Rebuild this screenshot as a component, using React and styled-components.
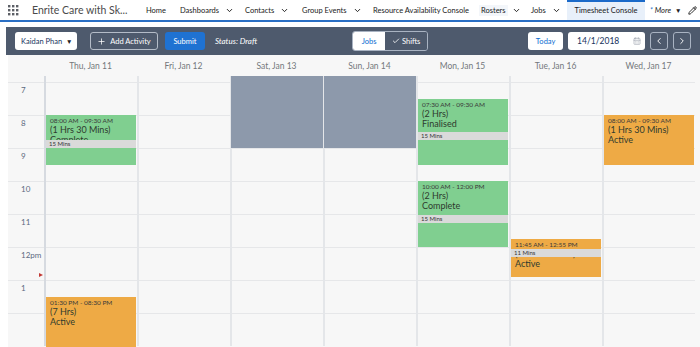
import styled, { createGlobalStyle } from "styled-components";
import { Plus, Check, ChevronDown, ChevronLeft, ChevronRight, CalendarDays, Pencil } from "lucide-react";

const GlobalStyle = createGlobalStyle`
  html, body {
    margin: 0;
    padding: 0;
    background: #ffffff;
    overflow: hidden;
  }
  body {
    width: 700px;
    height: 347px;
    font-family: Lato, "Open Sans", sans-serif;
    color: #16325c;
  }
`;

const HOUR = 33;
const FIRST = 7;
const LEAD = 6;
const hourY = (h) => LEAD + (h - FIRST) * HOUR;

const DAYS = [
  {
    label: "Thu, Jan 11",
    events: [
      { start: 8, end: 9.5, tone: "green", time: "08:00 AM - 09:30 AM", dur: "(1 Hrs 30 Mins)", status: "Complete", breakAt: 25, breakLabel: "15 Mins" },
      { start: 13.5, end: 20.5, tone: "orange", time: "01:30 PM - 08:30 PM", dur: "(7 Hrs)", status: "Active" },
    ],
  },
  { label: "Fri, Jan 12", events: [] },
  { label: "Sat, Jan 13", blockedUntil: 9, events: [] },
  { label: "Sun, Jan 14", blockedUntil: 9, events: [] },
  {
    label: "Mon, Jan 15",
    events: [
      { start: 7.5, end: 9.5, tone: "green", time: "07:30 AM - 09:30 AM", dur: "(2 Hrs)", status: "Finalised", breakAt: 33, breakLabel: "15 Mins" },
      { start: 10, end: 12, tone: "green", time: "10:00 AM - 12:00 PM", dur: "(2 Hrs)", status: "Complete", breakAt: 34, breakLabel: "15 Mins" },
    ],
  },
  {
    label: "Tue, Jan 16",
    events: [
      { start: 11.75, end: 12 + 55 / 60, tone: "orange", time: "11:45 AM - 12:55 PM", dur: "(1 Hrs 10 Mins)", status: "Active", breakAt: 10, breakLabel: "11 Mins" },
    ],
  },
  {
    label: "Wed, Jan 17",
    events: [
      { start: 8, end: 9.5, tone: "orange", time: "08:00 AM - 09:30 AM", dur: "(1 Hrs 30 Mins)", status: "Active" },
    ],
  },
];

const HOURS = ["7", "8", "9", "10", "11", "12pm", "1", ""];

const NAV = [
  { label: "Home", w: 34 },
  { label: "Dashboards", w: 65, menu: true },
  { label: "Contacts", w: 57, menu: true },
  { label: "Group Events", w: 71, menu: true },
  { label: "Resource Availability Console", w: 108 },
  { label: "Rosters", w: 50, menu: true, hover: true },
  { label: "Jobs", w: 36, menu: true },
];

const TONES = {
  green: "#80cf90",
  orange: "#eeaa45",
};

/* ---------- top navigation ---------- */

const Nav = styled.nav`
  display: flex;
  align-items: stretch;
  height: 20px;
  border-bottom: 2px solid #2a6fc4;
  background: #ffffff;
  white-space: nowrap;
  overflow: hidden;
`;

const Launcher = styled.div`
  flex: none;
  display: flex;
  align-items: center;
  width: 24px;
  padding-left: 8px;
  color: #5c5f66;
`;

const AppName = styled.div`
  flex: none;
  display: flex;
  align-items: center;
  width: 114px;
  font-size: 10.5px;
  color: #4a4a4a;
`;

const NavItem = styled.div`
  flex: none;
  display: flex;
  align-items: center;
  box-sizing: border-box;
  width: ${(p) => p.$w}px;
  font-size: 7.5px;
  color: #1a1a1a;

  span.label {
    padding: 1px 2px;
    margin-left: -2px;
    background: ${(p) => (p.$hover ? "#f3f6fa" : "transparent")};
  }

  svg {
    margin-left: 4px;
  }
`;

const ActiveTab = styled.div`
  flex: none;
  display: flex;
  align-items: center;
  justify-content: center;
  width: 78px;
  font-size: 7.5px;
  color: #1a1a1a;
  background: #e8f0fa;
  box-shadow: inset 0 2px 0 #1b6ac9;
`;

const MoreItem = styled.div`
  flex: none;
  display: flex;
  align-items: center;
  width: 38px;
  padding-left: 5px;
  font-size: 7.5px;
  font-style: italic;
  color: #1a1a1a;
`;

const EditItem = styled.div`
  flex: none;
  display: flex;
  align-items: center;
  color: #222;
`;

const Star = styled.span`
  color: #1b6ac9;
  font-size: 7px;
  margin-right: 2px;
`;

const Caret = styled.span`
  font-size: 6.5px;
  font-style: normal;
  margin-left: 4px;
  color: #222;
`;

/* ---------- toolbar ---------- */

const Page = styled.div`
  padding: 5px 0 0 6px;
  background: #ffffff;
`;

const Toolbar = styled.div`
  display: flex;
  align-items: center;
  height: 28px;
  padding: 0 9px;
  background: #4e5a6d;
  white-space: nowrap;
`;

const Select = styled.div`
  display: flex;
  align-items: center;
  justify-content: space-between;
  box-sizing: border-box;
  width: 62px;
  height: 18px;
  padding: 0 5px 0 6px;
  border-radius: 3px;
  background: #ffffff;
  font-size: 7.5px;
  color: #16325c;
`;

const Button = styled.div`
  display: flex;
  align-items: center;
  justify-content: center;
  gap: 4px;
  box-sizing: border-box;
  width: ${(p) => p.$w}px;
  height: 18px;
  margin-left: ${(p) => p.$ml || 0}px;
  border-radius: 3px;
  font-size: 7.5px;
  border: 1px solid ${(p) => p.$border || "transparent"};
  background: ${(p) => p.$bg || "transparent"};
  color: ${(p) => p.$color || "#ffffff"};
`;

const Status = styled.div`
  margin-left: 10px;
  font-size: 8px;
  font-style: italic;
  color: #ffffff;
`;

const Toggle = styled.div`
  display: flex;
  margin-left: 95px;
  height: 18px;
  border-radius: 3px;
  overflow: hidden;
  border: 1px solid #a9b3c2;
`;

const ToggleOption = styled.div`
  display: flex;
  align-items: center;
  justify-content: center;
  gap: 2px;
  width: ${(p) => p.$w}px;
  font-size: 7.5px;
  background: ${(p) => (p.$on ? "#ffffff" : "#4e5a6d")};
  color: ${(p) => (p.$on ? "#0a6bd1" : "#ffffff")};
`;

const DateInput = styled.div`
  display: flex;
  align-items: center;
  justify-content: space-between;
  box-sizing: border-box;
  width: 77px;
  height: 18px;
  margin-left: 5px;
  padding: 0 4px 0 9px;
  border-radius: 3px;
  background: #ffffff;
  font-size: 8.5px;
  color: #16325c;
`;

/* ---------- calendar ---------- */

const Calendar = styled.div`
  margin-left: 2px;
  background: #f7f7f7;
  height: 292px;
  overflow: hidden;
`;

const Columns = "36px repeat(7, 93px)";

const HeaderRow = styled.div`
  display: grid;
  grid-template-columns: ${Columns};
  height: 21px;
`;

const DayLabel = styled.div`
  display: flex;
  align-items: center;
  justify-content: center;
  font-size: 8.5px;
  color: #74777c;
`;

const Body = styled.div`
  display: grid;
  grid-template-columns: ${Columns};
`;

const TimeColumn = styled.div`
  position: relative;
  display: flex;
  flex-direction: column;
`;

const Lead = styled.div`
  height: ${LEAD}px;
  flex: none;
`;

const HourCell = styled.div`
  box-sizing: border-box;
  height: ${HOUR}px;
  flex: none;
  border-top: 1px solid #e6e7e9;
`;

const TimeLabel = styled(HourCell)`
  padding: 2px 0 0 13px;
  font-size: 8px;
  color: #5b6a80;
`;

const NowFlag = styled.div`
  position: absolute;
  right: 1px;
  top: ${(p) => p.$y - 2}px;
  width: 0;
  height: 0;
  border-top: 2.5px solid transparent;
  border-bottom: 2.5px solid transparent;
  border-left: 4px solid #c23934;
`;

const DayColumn = styled.div`
  position: relative;
  display: flex;
  flex-direction: column;
  border-left: 2px solid ${(p) => (p.$first ? "#d6dae0" : "#e4e6e9")};
`;

const Blocked = styled.div`
  position: absolute;
  top: 0;
  left: -1px;
  right: 0;
  height: ${(p) => p.$h}px;
  background: #8d99ab;
`;

const EventBox = styled.div`
  position: absolute;
  left: 0;
  right: 1px;
  box-sizing: border-box;
  padding: 2px 4px;
  overflow: hidden;
  background: ${(p) => TONES[p.$tone]};
  color: #2b2b2b;
`;

const EventTime = styled.div`
  font-size: 6.5px;
  line-height: 8px;
  color: #3a3a3a;
`;

const EventLine = styled.div`
  font-size: 9px;
  line-height: 10px;
  color: #2e3a2e;
`;

const BreakBar = styled.div`
  position: absolute;
  left: 0;
  right: 0;
  top: ${(p) => p.$top}px;
  height: 8px;
  padding-left: 3px;
  background: #dadada;
  font-size: 6px;
  line-height: 8px;
  color: #333;
`;

function LauncherIcon() {
  const dots = [];
  for (let r = 0; r < 3; r++) {
    for (let c = 0; c < 3; c++) {
      dots.push(<rect key={`${r}${c}`} x={c * 4} y={r * 4} width="2.4" height="2.4" fill="currentColor" />);
    }
  }
  return (
    <svg width="11" height="11" viewBox="0 0 11 11">
      {dots}
    </svg>
  );
}

function CalEvent({ ev }) {
  const top = hourY(ev.start);
  const height = (ev.end - ev.start) * HOUR;
  return (
    <EventBox $tone={ev.tone} style={{ top, height }}>
      <EventTime>{ev.time}</EventTime>
      <EventLine>{ev.dur}</EventLine>
      <EventLine>{ev.status}</EventLine>
      {ev.breakLabel && <BreakBar $top={ev.breakAt}>{ev.breakLabel}</BreakBar>}
    </EventBox>
  );
}

export default function App() {
  return (
    <>
      <GlobalStyle />
      <Nav>
        <Launcher>
          <LauncherIcon />
        </Launcher>
        <AppName>Enrite Care with Sk...</AppName>
        {NAV.map((n) => (
          <NavItem key={n.label} $w={n.w} $hover={n.hover}>
            <span className="label">{n.label}</span>
            {n.menu && <ChevronDown size={9} strokeWidth={2.5} />}
          </NavItem>
        ))}
        <ActiveTab>Timesheet Console</ActiveTab>
        <MoreItem>
          <Star>*</Star>More<Caret>▼</Caret>
        </MoreItem>
        <EditItem>
          <Pencil size={9} strokeWidth={2.5} />
        </EditItem>
      </Nav>

      <Page>
        <Toolbar>
          <Select>
            Kaidan Phan <Caret>▼</Caret>
          </Select>
          <Button $w={68} $ml={13} $border="#b4bcc8">
            <Plus size={9} strokeWidth={2} /> Add Activity
          </Button>
          <Button $w={40} $ml={7} $bg="#1f72d2">
            Submit
          </Button>
          <Status>Status: Draft</Status>
          <Toggle>
            <ToggleOption $on $w={32}>
              Jobs
            </ToggleOption>
            <ToggleOption $w={42}>
              <Check size={8} strokeWidth={2.5} />
              Shifts
            </ToggleOption>
          </Toggle>
          <Button $w={35} $ml={100} $bg="#ffffff" $color="#0a6bd1">
            Today
          </Button>
          <DateInput>
            14/1/2018 <CalendarDays size={8} color="#a2a8b2" />
          </DateInput>
          <Button $w={18} $ml={5} $border="#a9b3c2">
            <ChevronLeft size={10} strokeWidth={2.2} />
          </Button>
          <Button $w={18} $ml={5} $border="#a9b3c2">
            <ChevronRight size={10} strokeWidth={2.2} />
          </Button>
        </Toolbar>

        <Calendar>
          <HeaderRow>
            <div />
            {DAYS.map((d) => (
              <DayLabel key={d.label}>{d.label}</DayLabel>
            ))}
          </HeaderRow>
          <Body>
            <TimeColumn>
              <Lead />
              {HOURS.map((h, i) => (
                <TimeLabel key={i}>{h}</TimeLabel>
              ))}
              <NowFlag $y={hourY(12 + 50 / 60)} />
            </TimeColumn>
            {DAYS.map((d, i) => (
              <DayColumn key={d.label} $first={i === 0}>
                <Lead />
                {HOURS.map((h, j) => (
                  <HourCell key={j} />
                ))}
                {d.blockedUntil && <Blocked $h={hourY(d.blockedUntil)} />}
                {d.events.map((ev) => (
                  <CalEvent key={ev.time} ev={ev} />
                ))}
              </DayColumn>
            ))}
          </Body>
        </Calendar>
      </Page>
    </>
  );
}
